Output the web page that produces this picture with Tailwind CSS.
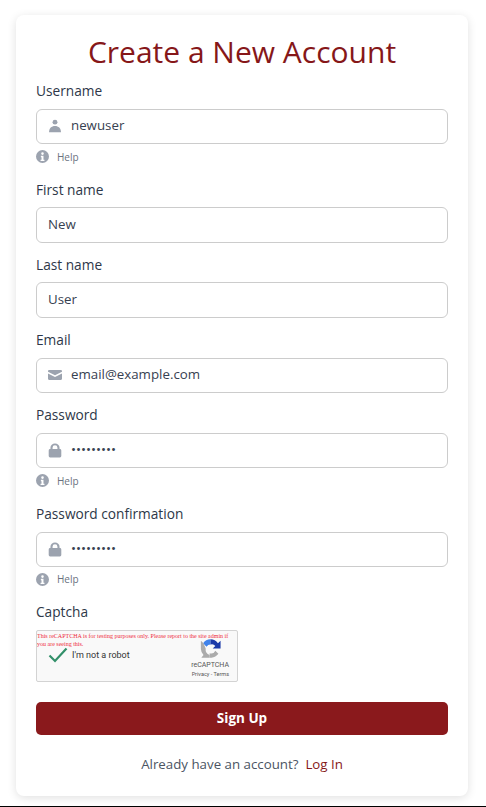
<!DOCTYPE html>
<html lang="en">
<head>
    <meta charset="UTF-8">
    <meta name="viewport" content="width=device-width, initial-scale=1.0">
    <title>Create a New Account</title>
    <script src="https://cdn.jsdelivr.net/npm/@tailwindcss/browser@4"></script>
</head>
<body class="bg-white font-['Open_Sans',sans-serif] text-[13.3px] text-[#374151]">
<div class="h-[807px] flex flex-col overflow-hidden">
    <div class="ml-4 mt-[15px] w-[452px] h-[781px] bg-white rounded-lg shadow-[0_2px_10px_rgba(0,0,0,0.12)] px-5 pt-[20px]">
        <h1 class="text-[30px] leading-[34px] text-[#861719] text-center mb-[12px]">Create a New Account</h1>

        <!-- Username -->
        <label class="block h-5 leading-5 text-[13.7px] text-[#2d3748]">Username</label>
        <div class="mt-[7.5px] h-[35.5px] flex items-center border border-[#ccc] rounded-md pl-[11px] pr-[11px] bg-white">
            <svg class="w-[14px] h-[14px] shrink-0 mr-[9px] text-[#9ca3af]" viewBox="0 0 20 20" fill="currentColor"><circle cx="10" cy="4.500" r="3.500"/><path d="M1.500 19c0-6 3.500-9 8.500-9s8.500 3 8.500 9z"/></svg>
            <input type="text" value="newuser" class="w-full outline-none pb-[1px] text-[#374151]">
        </div>
        <div class="h-6 flex items-center text-[10px] text-[#6b7280] mb-3">
            <svg class="w-[13px] h-[13px] mr-2 text-[#9ca3af]" viewBox="0 0 20 20" fill="currentColor"><path fill-rule="evenodd" d="M10 0a10 10 0 100 20 10 10 0 000-20zM10 3.500a2 2 0 110 4 2 2 0 010-4zM7.500 9h4v6h1.500v2H7v-2h1.500v-4h-1z"/></svg>
            <span class="mt-[3px]">Help</span>
        </div>

        <!-- First name -->
        <label class="block h-5 leading-5 text-[13.7px] text-[#2d3748]">First name</label>
        <input type="text" value="New" class="block w-full mt-[7px] mb-[12.5px] h-[35.5px] pb-[1px] border border-[#ccc] rounded-md px-[11px] outline-none">

        <!-- Last name -->
        <label class="block h-5 leading-5 text-[13.7px] text-[#2d3748]">Last name</label>
        <input type="text" value="User" class="block w-full mt-[7px] mb-[12.5px] h-[35.5px] pb-[1px] border border-[#ccc] rounded-md px-[11px] outline-none">

        <!-- Email -->
        <label class="block h-5 leading-5 text-[13.7px] text-[#2d3748]">Email</label>
        <div class="mt-[7.5px] mb-3 h-[35.5px] flex items-center border border-[#ccc] rounded-md px-[11px]">
            <svg class="w-[14px] h-[14px] shrink-0 mr-[9px] text-[#9ca3af]" viewBox="0 0 20 20" fill="currentColor"><path d="M0 4.500A1.500 1.500 0 011.500 3h17A1.500 1.500 0 0120 4.500v1L10 10.500 0 5.500z"/><path d="M0 8l10 5 10-5v7.500a1.500 1.500 0 01-1.500 1.500h-17A1.500 1.500 0 010 15.500z"/></svg>
            <input type="text" value="email@example.com" class="w-full pb-[1px] outline-none">
        </div>

        <!-- Password -->
        <label class="block h-5 leading-5 text-[13.7px] text-[#2d3748]">Password</label>
        <div class="mt-[7.5px] h-[35.5px] flex items-center border border-[#ccc] rounded-md px-[11px]">
            <svg class="w-[14px] h-[15px] shrink-0 mr-[9px] text-[#9ca3af]" viewBox="0 0 20 20" fill="currentColor"><path fill-rule="evenodd" d="M3.500 8V6a6.500 6 0 0113 0v2h.5A2 2 0 0119 10v8a2 2 0 01-2 2H3a2 2 0 01-2-2v-8a2 2 0 012-2zM6.500 8h7V6a3.500 3.500 0 00-7 0z"/></svg>
            <input type="password" value="password1" class="w-full outline-none">
        </div>
        <div class="h-6 flex items-center text-[10px] text-[#6b7280] mb-3">
            <svg class="w-[13px] h-[13px] mr-2 text-[#9ca3af]" viewBox="0 0 20 20" fill="currentColor"><path fill-rule="evenodd" d="M10 0a10 10 0 100 20 10 10 0 000-20zM10 3.500a2 2 0 110 4 2 2 0 010-4zM7.500 9h4v6h1.500v2H7v-2h1.500v-4h-1z"/></svg>
            <span class="mt-[2px]">Help</span>
        </div>

        <!-- Password confirmation -->
        <label class="block h-5 leading-5 text-[13.7px] text-[#2d3748]">Password confirmation</label>
        <div class="mt-[7.5px] h-[35.5px] flex items-center border border-[#ccc] rounded-md px-[11px]">
            <svg class="w-[14px] h-[15px] shrink-0 mr-[9px] text-[#9ca3af]" viewBox="0 0 20 20" fill="currentColor"><path fill-rule="evenodd" d="M3.500 8V6a6.500 6 0 0113 0v2h.5A2 2 0 0119 10v8a2 2 0 01-2 2H3a2 2 0 01-2-2v-8a2 2 0 012-2zM6.500 8h7V6a3.500 3.500 0 00-7 0z"/></svg>
            <input type="password" value="password1" class="w-full outline-none">
        </div>
        <div class="h-6 flex items-center text-[10px] text-[#6b7280] mb-[11px]">
            <svg class="w-[13px] h-[13px] mr-2 text-[#9ca3af]" viewBox="0 0 20 20" fill="currentColor"><path fill-rule="evenodd" d="M10 0a10 10 0 100 20 10 10 0 000-20zM10 3.500a2 2 0 110 4 2 2 0 010-4zM7.500 9h4v6h1.500v2H7v-2h1.500v-4h-1z"/></svg>
            <span class="mt-[1px]">Help</span>
        </div>

        <!-- Captcha -->
        <label class="block h-5 leading-5 text-[13.7px] text-[#2d3748]">Captcha</label>
        <div class="mt-[8px] w-[202px] h-[52px] border border-[#d3d3d3] bg-[#f9f9f9] rounded-[2px] relative overflow-hidden">
            <p class="font-['Liberation_Serif',serif] text-[6px] leading-[8px] text-[#ef2b3c] pt-[1px]">This reCAPTCHA is for testing purposes only. Please report to the site admin if you are seeing this.</p>
            <div class="flex items-center mt-[-1px] pl-[11px]">
                <svg class="w-[20px] h-[16px]" viewBox="0 0 20 16" fill="none"><path d="M1.500 8.500l5.500 5.500L18.500 1.500" stroke="#33906a" stroke-width="2.200"/></svg>
                <span class="font-['Roboto',sans-serif] text-[9px] ml-[4px] mt-[1px] text-[#333]">I'm not a robot</span>
            </div>
            <svg class="absolute left-[163px] top-[7px] w-[21px] h-[21px]" viewBox="0 0 24 24" fill="none">
                <path d="M12 1.500A10.500 10.500 0 003.500 6l4 4A5 5 0 0112 7.500z" fill="#3f82ea"/>
                <path d="M12 1.500a10.500 10.500 0 018.500 4.500L23.500 3v9h-9l3-3A5 5 0 0012 7.500z" fill="#1c3aa9"/>
                <path d="M1 3v9.500a11 11 0 003 7L1.500 22.500H11v-3a7 7 0 01-4.500-7.500H6.500L4 6z" fill="#ababab"/>
                <path d="M11 22.500h2a11 11 0 008-4.500l-3.500-3.500A5.500 5.500 0 0111 17.500z" fill="#ababab"/>
            </svg>
            <div class="absolute left-0 w-[192px] top-[30px] text-right font-['Roboto',sans-serif] text-[#555] leading-none">
                <div class="text-[7px] mt-[1px]">reCAPTCHA</div>
                <div class="text-[5.500px] mt-[3px]">Privacy - Terms</div>
            </div>
        </div>

        <button class="block w-full h-[33px] mt-[20px] bg-[#8a191c] text-white text-[13.500px] font-bold rounded-[5px] pb-[1px]">Sign Up</button>
        <p class="text-center mt-[19px] leading-5 text-[#4b5563]">Already have an account?&nbsp; <a href="#" class="text-[#861719]">Log In</a></p>
    </div>
    <div class="mt-auto h-px bg-black shrink-0"></div>
</div>
</body>
</html>
